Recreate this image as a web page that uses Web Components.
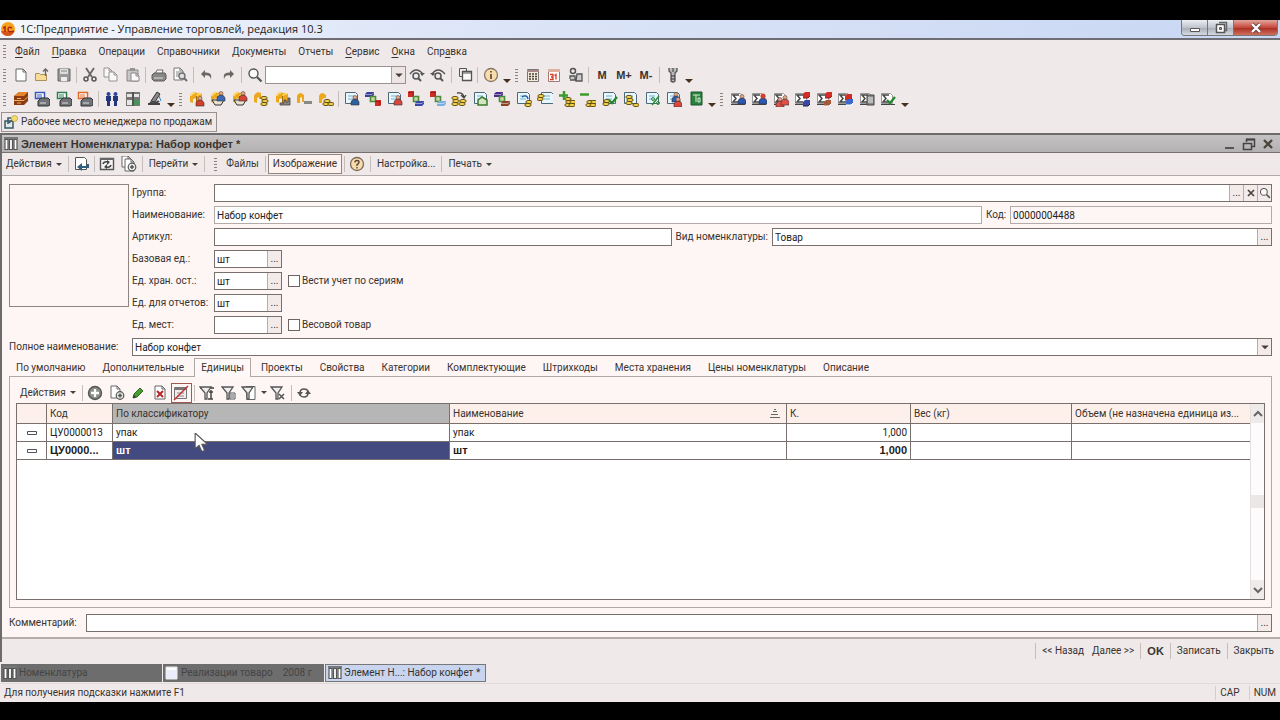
<!DOCTYPE html>
<html lang="ru">
<head>
<meta charset="utf-8">
<title>1С:Предприятие</title>
<style>
html,body{margin:0;height:100%}
body{background:#000;font:10px/14px Roboto,"Liberation Sans",Arial,sans-serif;color:#38332f;overflow:hidden}
</style>
</head>
<body>
<app-shell></app-shell>
<script>
/* ---------- icon parts ---------- */
const doc=(x=1,y=1,w=10,h=12)=>`<path d="M${x} ${y}h${w-3}l3 3v${h-3}h-${w}z" fill="#fff" stroke="#666"/><path d="M${x+w-3} ${y}v3h3" fill="none" stroke="#666"/>`;
const bdoc=`<path d="M1.500 1.500h10l2 2v9h-12z" fill="#eaf6fb" stroke="#4a6a7a"/><path d="M4 5h6M4 8h6" stroke="#68b4d4"/>`;
const man=(x,y,c)=>`<circle cx="${x+3}" cy="${y+1.500}" r="2" fill="#e3a78a" stroke="#643" stroke-width=".6"/><path d="M${x-1} ${y+9}v-3q1-3 4-3t4 3v3z" fill="${c}" stroke="#333" stroke-width=".6"/>`;
const box=`<path d="M1 11V5q1-3 4-4l3 1q2-1 5 1v9l-5 2V7L4 8v4z" fill="#eda81c"/><path d="M2 5q1-3 4-3M8 5q1-3 4-2" fill="none" stroke="#ffdc6c" stroke-width="1.500"/><path d="M7.500 5v8" stroke="#a36a10"/>`;
const coin=(x,y,n=3)=>Array.from({length:n},(_,i)=>`<ellipse cx="${x+3+i%2}" cy="${y+8-i*3}" rx="3.200" ry="1.600" fill="#f3cf4a" stroke="#55450c" stroke-width=".9"/>`).join('');
const cube=(x,y,c)=>`<path d="M${x} ${y+1}l1-1h5v5l-1 1h-5z" fill="${c}"/><path d="M${x} ${y+1.500}h5v4.500" fill="none" stroke="#0004"/>`;
const slab=(x,y,c)=>`<path d="M${x} ${y+2}l2-2h7v3l-2 2h-7z" fill="${c}"/><path d="M${x} ${y+2.500}h7l2-2" fill="none" stroke="#fff7"/>`;
const link=`<path d="M5.500 5.500h5v5h-5z" fill="#c8d8a8" stroke="#4a8a3a" stroke-width="1.600"/>`;
const brick=(x,y,c,d)=>`<path d="M${x} ${y+2}l2-2h5v4l-2 2h-5z" fill="${c}"/><path d="M${x} ${y+6}h5l2-2" fill="none" stroke="${d}"/>`;
const basket=c=>`<path d="M2 9h12l-3 5H5z" fill="#e8e2d0" stroke="#333"/>`+man(8,1,c);
const sum=`<path d="M1.500 2.500h9l2 2v8h-11z" fill="#fff" stroke="#999"/><path d="M9 4H3l3 3.500L3 11h6" fill="none" stroke="#444" stroke-width="1.500"/><path d="M1 13.500h14" stroke="#444"/>`;
const check=`<path d="M7 9l3 3 5-6" fill="none" stroke="#23852c" stroke-width="2.200"/>`;
const lens=(c='#555')=>`<circle cx="6.500" cy="6.500" r="4.500" fill="#fafafa" stroke="${c}" stroke-width="1.400"/><path d="M10 10l4.500 4.500" stroke="${c}" stroke-width="2.200"/>`;
const printer=`<path d="M4 7l2-4h6l-1 4" fill="#fff" stroke="#555"/><path d="M1 8l2-2h11l1 2v4l-2 2H3l-2-2z" fill="#777" stroke="#444"/><path d="M3 11h9" stroke="#ddd"/>`;
const report=c=>`<path d="M1.500 1.500h9v6h-9z" fill="#fff" stroke="${c}" stroke-width="1.500"/><path d="M3 4h5M3 6h5" stroke="${c}"/><path d="M4 10l3-3h7l2 2v5l-2 1H4z" fill="#707378" stroke="#333"/><path d="M6 12h6" stroke="#ddd"/>`;
const funnel=`<path d="M1 2h11L8 8v6H6V8z" fill="#eee" stroke="#555" stroke-width="1.300"/>`;
const undo=`<path d="M6 3L2 7l4 4V8.500q5-1 6 4Q14 5 6 5.500z" fill="#6b6763"/>`;
const ICONS={
 logo:`<circle cx="8" cy="8" r="7" fill="#f4a21e"/><path d="M1 10a7 7 0 0 0 13 1z" fill="#d8541b"/><path d="M3 7l2-1v5M12 7q-4-2-4 1.500T14 10" fill="none" stroke="#b02418" stroke-width="1.500"/>`,
 new:doc(3,2,10,12),
 open:`<path d="M1.500 6.500h4l1 1h6v6h-11z" fill="#f8dc95" stroke="#a8925c"/><path d="M11.500 9V2M9 4.500L11.500 2 14 4.500" fill="none" stroke="#666" stroke-width="1.300"/>`,
 save:`<path d="M2 2h12v12H2z" fill="#999" stroke="#666"/><path d="M4 2h8v5H4z" fill="#ddd"/><path d="M5 10h6v4H5z" fill="#eee"/><path d="M5 4h6" stroke="#888"/>`,
 cut:`<path d="M4 1l6 9M12 1L6 10" stroke="#666" stroke-width="1.800"/><circle cx="4" cy="12" r="2" fill="none" stroke="#555" stroke-width="1.500"/><circle cx="12" cy="12" r="2" fill="none" stroke="#555" stroke-width="1.500"/>`,
 copy:`<g opacity=".65">${doc(1,1,8,9)}${doc(6,5,8,9)}</g>`,
 paste:`<g opacity=".75"><path d="M2 3h11v11H2z" fill="#bbb" stroke="#666"/><path d="M5 1h5v3H5z" fill="#777"/>${doc(6,6,8,8)}</g>`,
 print:`<g opacity=".85">${printer}</g>`,
 preview:`<g opacity=".85">${doc(2,1,9,12)}<path d="M4 5h4M4 7h4M4 9h3" stroke="#777"/><circle cx="10" cy="9" r="3" fill="#ddd" stroke="#555" stroke-width="1.300"/><path d="M12 11l3 3" stroke="#555" stroke-width="2"/></g>`,
 undo, redo:`<g transform="translate(16 0) scale(-1 1)">${undo}</g>`,
 find:lens(),
 next:`<path d="M1 7q6-8 13 0" fill="none" stroke="#555" stroke-width="1.500"/><path d="M11 6h5l-3 3z" fill="#555"/><circle cx="7" cy="9" r="3" fill="none" stroke="#555" stroke-width="1.500"/><path d="M9 11l3 3" stroke="#555" stroke-width="2"/>`,
 prev:`<path d="M2 7q6-8 13 0" fill="none" stroke="#555" stroke-width="1.500"/><path d="M0 6h5L3 9z" fill="#555"/><circle cx="8" cy="9" r="3" fill="none" stroke="#555" stroke-width="1.500"/><path d="M10 11l3 3" stroke="#555" stroke-width="2"/>`,
 windows:`<path d="M2.500 1.500h7v8h-7z" fill="#eee" stroke="#555"/><path d="M5.500 4.500h9v9h-9z" fill="#fafafa" stroke="#555" stroke-width="1.300"/><path d="M5 6h9" stroke="#555"/>`,
 info:`<circle cx="8" cy="8" r="6.500" fill="#f7dcae" stroke="#8a7660" stroke-width="1.300"/><path d="M8 7v5M8 4v1.500" stroke="#6a523a" stroke-width="1.800"/>`,
 help:`<circle cx="8" cy="8" r="6.500" fill="#f9dcae" stroke="#7b6a58" stroke-width="1.300"/><path d="M6 6.500q0-2 2-2t2 1.700T8 8.500V10M8 11v1.500" fill="none" stroke="#5a4636" stroke-width="1.400"/>`,
 calc:`<path d="M2.500 2.500h11v12h-11z" fill="#f6e9d6" stroke="#777"/><path d="M2 4h12" stroke="#a88" stroke-width="2"/><path d="M4 7h8M4 9.500h8M4 12h8" stroke="#444" stroke-width="1.500" stroke-dasharray="2 1"/>`,
 cal:`<path d="M2.500 2.500h11v12h-11z" fill="#fff" stroke="#a77"/><path d="M2 3.500h12" stroke="#ddb0a0" stroke-width="3"/><path d="M4 7.500h3v2.500H5h2v2.500H4M10 12.500v-5l-1.500 1" fill="none" stroke="#d43a20" stroke-width="1.300"/>`,
 tools:`<circle cx="5" cy="4" r="2.500" fill="none" stroke="#555" stroke-width="1.500"/><path d="M2 12V9h5v4H2M9 7h5v7H8z" fill="#ccc" stroke="#555" stroke-width="1.300"/>`,
 wrench:`<path d="M4 1v3l2 2v8q2 2 4 0V6l2-2V1M8 1v4" fill="#bbb" stroke="#555" stroke-width="1.300"/><path d="M6 9h4M6 12h4" stroke="#333"/>`,
 box3:`<path d="M1 5l5-4h9v9l-4 4H1z" fill="#8d3a12"/><path d="M1 5l5-4h9l-4 4z" fill="#e4862c"/><path d="M1 9.500h10l4-4M4 7.500h4M4 12h4" fill="none" stroke="#f0b060"/>`,
 repb:report('#3858b8'),repg:report('#2e8054'),repo:report('#e2682c'),
 people:`<circle cx="4.500" cy="3" r="2" fill="#2b4698"/><circle cx="11.500" cy="3" r="2" fill="#2b4698"/><path d="M2 5h5v5H6v5H3v-5H2zM9 5h5v5h-1v5h-3v-5H9z" fill="#22367e"/>`,
 table:`<path d="M1 1h14v14H1z" fill="#777"/><path d="M2 3h5v3H2zM9 3h5v3H9zM2 9h5v5H2z" fill="#e6e6e6"/><path d="M9 9h5v5H9z" fill="#46945c"/><path d="M8 1v14" stroke="#333"/>`,
 scope:`<path d="M4 10L10 1l3 2-5 8z" fill="#888" stroke="#333"/><path d="M1 13h12M3 11q4 3 9-1" fill="none" stroke="#444" stroke-width="2"/><path d="M12 5l2 5" stroke="#28c"/>`,
 b1:box+man(8,6,'#d63e28'),b2:box+basket('#3a68b4'),b3:box+basket('#d64438'),
 b4:`<path d="M1 11V5q1-3 4-4l3 1v6H6V6L4 7v5z" fill="#eda81c"/>`+coin(8,5),
 b5:box+`<path d="M5 14h10V7h-2v4h-2V9H9v3H5z" fill="#8a857c" stroke="#444" stroke-width=".8"/>`,
 b6:`<path d="M1 12V5q1-3 4-3l3 2v7H6V6L4 7v5z" fill="#eda81c"/><path d="M8 10h8v3H8z" fill="#8a8a84"/>`,
 b7:`<path d="M1 12V5q1-3 4-3l3 2v3H6L4 9v3z" fill="#eda81c"/>`+coin(5,5,2)+coin(10,5,1),
 d1:bdoc+man(8,5,'#2f5f9c'),d2:slab(0,1,'#3a3f9a')+link+cube(10,9,'#d22c24'),d3:bdoc+man(8,5,'#d8463c'),
 d4:cube(0,0,'#d22c24')+link+slab(7,10,'#3b48a8'),d5:cube(0,0,'#d22c24')+link+slab(7,10,'#78aee0'),
 d6:coin(1,5,3)+coin(8,5,2)+`<path d="M6 2q6-1 7 4M10 4l3 3 2-3" fill="none" stroke="#444" stroke-width="1.300"/>`,
 d7:bdoc+`<path d="M5 14V9l4-3 5 3v5z" fill="#d4e4c0" stroke="#3d7a2c" stroke-width="1.500"/>`,
 d8:slab(0,1,'#4a2c8c')+link+slab(7,10,'#8c4428'),
 d9:bdoc+coin(9,6,2)+`<path d="M6 6q5-3 6 2" fill="none" stroke="#235fa0" stroke-width="1.500"/>`,
 d10:`<g transform="translate(3 0)">${bdoc}</g>`+coin(0,0,2),
 d11:coin(6,6,3)+coin(10,6,2)+`<path d="M5 0v9M0 4.500h9" stroke="#3f9a2e" stroke-width="2.500"/>`,
 d12:coin(6,6,2)+coin(10,6,2)+`<path d="M0 3.500h9" stroke="#3f9a2e" stroke-width="2.500"/>`,
 d13:bdoc+coin(1,5,2)+check,d14:bdoc+coin(3,4,3)+coin(10,6,1),
 d15:bdoc+`<path d="M14 5l-7 9" stroke="#2c8a34" stroke-width="1.500"/><circle cx="8" cy="8" r="1.500" fill="none" stroke="#2c8a34"/><circle cx="13" cy="12" r="1.500" fill="none" stroke="#2c8a34"/>`,
 d16:bdoc+man(7,2,'#2c5cb0')+man(9,7,'#d8463c'),
 d17:`<path d="M3 1h11v13H3z" fill="#2b8040" stroke="#1c5428"/><path d="M5 4h7M8 4v7M10 7h2v4h-2z" fill="none" stroke="#d8f0d0"/>`,
 s1:sum+man(9,4,'#2c56b0'),s2:sum+man(9,4,'#2c56b0')+`<circle cx="12" cy="5" r="2.500" fill="#d04030"/>`,s3:sum+man(4,7,'#e05048')+man(9,5,'#e05048'),
 s4:sum+brick(9,1,'#d22c24','#822')+brick(9,9,'#3b48a8','#223'),s5:sum+brick(9,1,'#d22c24','#822')+brick(8,9,'#a45a3a','#fff'),
 s6:sum+brick(8,3,'#d22c24','#822')+brick(9,8,'#3a68d0','#fff'),
 s7:sum+`<path d="M8 4h7v10H8z" fill="#888" stroke="#444"/><path d="M9 7h5M9 9h5M9 11h5" stroke="#eee"/>`,s8:sum+check,
 place:`<path d="M2 7h8v7H2z" fill="#dfe9e6" stroke="#3a5a68" stroke-width="1.500"/><path d="M5 10V4h3M6 9l5-5" fill="none" stroke="#3a5a68" stroke-width="1.500"/><circle cx="11.500" cy="4.500" r="3" fill="#f5dc70" stroke="#b59b3c" stroke-width=".7"/>`,
 cols:`<path d="M2 3.500h3v10H2zM6.500 3.500h3v10h-3zM11 3.500h3v10h-3z" fill="#fff" stroke="#555" stroke-width="1.200"/><path d="M1 2h14" stroke="#777" stroke-width="2"/>`,
 page:`<path d="M2 2h11v12H2z" fill="#e9eefa" stroke="#eee"/><path d="M3 4h9" stroke="#fff" stroke-width="2"/>`,
 enter:`<path d="M2.500 1.500h9l2 2v10h-11z" fill="#fff" stroke="#555"/><path d="M15 8v3H8" fill="none" stroke="#2f5f80" stroke-width="2"/><path d="M9 7v8l-5-4z" fill="#2f5f80"/>`,
 reload:`<path d="M1.500 2.500h13v11h-13z" fill="#f3f3f3" stroke="#555" stroke-width="1.400"/><path d="M1 3h14" stroke="#666" stroke-width="2"/><path d="M4 8q1-3 5-2M12 9q-1 3-5 2" fill="none" stroke="#444" stroke-width="1.500"/><path d="M8 4l3 2-3 3zM8 8l-3 3 3 2z" fill="#444"/>`,
 addcopy:`${doc(1,0,9,11)}${doc(4,3,9,12)}<circle cx="11" cy="11" r="3.800" fill="#e8efe8" stroke="#555" stroke-width="1.200"/><path d="M11 9v4M9 11h4" stroke="#555" stroke-width="1.500"/>`,
 add:`<circle cx="8" cy="8" r="6.500" fill="#8a8f86" stroke="#555" stroke-width="1.400"/><path d="M8 4v8M4 8h8" stroke="#fff" stroke-width="2.300"/>`,
 adddoc:`${doc(2,1,9,12)}<circle cx="11" cy="10.500" r="3.800" fill="#dfe8dc" stroke="#555" stroke-width="1.200"/><path d="M11 8.500v4M9 10.500h4" stroke="#555" stroke-width="1.500"/>`,
 edit:`<path d="M3 13l1-4 6-6 3 3-6 6z" fill="#4c9c34" stroke="#2c6a1e"/><path d="M3 13l1-3 2 2z" fill="#333"/>`,
 del:`${doc(3,1,10,13)}<path d="M5 6l6 6M11 6l-6 6" stroke="#b8262c" stroke-width="2"/>`,
 nogroup:`<path d="M1.500 2.500h12v11h-12z" fill="#f3eeee" stroke="#777"/><path d="M2 4h11" stroke="#777" stroke-width="2"/><path d="M4 8h7M4 11h7" stroke="#888"/><path d="M15 1L1 15" stroke="#c03030" stroke-width="1.500"/>`,
 f1:`<path d="M1 2h14v2H1z" fill="#666"/>${funnel}<path d="M10 7h4M12 5v9M9 14h5" stroke="#444" stroke-width="1.500"/>`,
 f2:`${funnel}<path d="M9 8h5v6H9z" fill="#fff" stroke="#555"/><path d="M10 10h3M10 12h3" stroke="#555"/>`,
 f3:`<path d="M5 1.500h9v13H6z" fill="#fff" stroke="#666"/>${funnel}`,
 f4:`${funnel}<path d="M9 9l5 5M14 9l-5 5" stroke="#555" stroke-width="1.500"/>`,
 refresh:`<path d="M4 8q0-4 4-4 3 0 4 2M12 8q0 4-4 4-3 0-4-2" fill="none" stroke="#555" stroke-width="1.600"/><path d="M1 7h6l-3 4zM15 9H9l3-4z" fill="#555"/>`,
 min:`<path d="M3 12h9" stroke="#555" stroke-width="2"/>`,
 rest:`<path d="M5.500 6V3.500h8v7h-3" fill="none" stroke="#444" stroke-width="1.500"/><path d="M5 3.500h9" stroke="#444" stroke-width="2"/><path d="M2.500 7.500h8v6h-8z" fill="none" stroke="#444" stroke-width="1.500"/>`,
 cross:`<path d="M4 4l8 8M12 4l-8 8" stroke="#4a443c" stroke-width="2.300"/>`,
 wmin:`<path d="M3.500 8.500h9v3h-9z" fill="#fff" stroke="#555"/>`,
 wrest:`<path d="M6 2.500h7.500v8H12" fill="none" stroke="#666" stroke-width="1.500"/><path d="M3.500 4.500h8v8h-8z" fill="#fff" stroke="#555" stroke-width="1.500"/><path d="M6.500 7.500h2v2h-2z" fill="#aaa" stroke="#555"/>`,
 wclose:`<path d="M4 4l8 8M12 4l-8 8" stroke="#644" stroke-width="4"/><path d="M4 4l8 8M12 4l-8 8" stroke="#fff" stroke-width="2.300"/>`,
 down:`<path d="M3 6h10l-5 5z" fill="#45403d"/>`,
 up:`<path d="M4 10l4-4 4 4" fill="none" stroke="#666" stroke-width="2"/>`,
 dn:`<path d="M4 6l4 4 4-4" fill="none" stroke="#666" stroke-width="2"/>`,
 sort:`<path d="M3 12.500h10M4 9.500h7M6 6.500h4M7 4.500h2" stroke="#666"/>`,
 dash:`<path d="M3.500 6.500h9v3h-9z" fill="#fff" stroke="#555"/>`,
 cursor:`<path d="M1 0v14l3.500-3 2.500 5.500 2.500-1L7 10h5z" fill="#fff" stroke="#555"/>`
};
const define=(name,css,html,init)=>customElements.define(name,class extends HTMLElement{
  constructor(){
    super();
    const r=this.attachShadow({mode:'open'});
    const t=document.createElement('template');
    t.innerHTML=`<style>*{box-sizing:border-box}button,input{font:inherit;color:inherit;margin:0;padding:0;border:0;background:none}${css}</style>`+(typeof html==='function'?html(this):html);
    r.append(t.content.cloneNode(true));
    if(init)init(this,r);
  }
});
const A=(e,n,d='')=>e.getAttribute(n)??d;
const BOLD=`font-family:"Liberation Sans",Arial,sans-serif;font-size:11px;font-weight:bold`;

define('ui-icon',`:host{display:block;flex:none;width:16px;height:16px}svg{display:block;width:100%;height:100%}`,
  e=>`<svg viewBox="0 0 16 16" aria-hidden="true">${ICONS[A(e,'name')]||''}</svg>`);

define('tool-button',`:host{display:block;flex:none}
button{display:flex;align-items:center;justify-content:center;width:100%;height:20px;white-space:nowrap;border:1px solid transparent}
:host([text]) button{padding:0 3px}
:host([bold]) button{${BOLD}}
:host([boxed]) button{border-color:#8d8681;background:#fef2ef;padding:0 4px}
:host([drop]) button::after{content:"";border:3px solid transparent;border-top-color:#45403d;border-bottom:0;margin-left:4px}`,
  e=>`<button type="button" aria-label="${A(e,'icon')}">${e.hasAttribute('icon')?`<ui-icon name="${A(e,'icon')}"></ui-icon>`:''}<slot></slot></button>`,
  (e,r)=>{if(!e.hasAttribute('icon'))r.querySelector('button').removeAttribute('aria-label')});

define('tool-icons',`:host{display:flex;flex:none}tool-button{width:21px}tool-button:nth-of-type(even){width:22px}`,
  e=>A(e,'names').split(' ').map(n=>`<tool-button icon="${n}"></tool-button>`).join(''));
define('tool-sep',`:host{display:block;flex:none;width:5px;height:16px}i{display:block;width:1px;height:100%;margin:0 2px;background:#c4bdba}`,`<i></i>`);
define('tool-grip',`:host{display:block;flex:none;width:3px;height:13px;margin:0 4px 0 3px;background:repeating-linear-gradient(#8a8380 0 1px,transparent 1px 3px)}`,``);
define('tool-more',`:host{display:flex;flex:none;align-items:flex-end;justify-content:center;width:11px;height:16px}i{border:4px solid transparent;border-top-color:#45301f;border-bottom:0}`,`<i></i>`);

define('title-bar',`:host{display:flex;flex:none;height:20px;background:linear-gradient(90deg,#f4f6fb,#dfe7f8 30%,#c9d7f3);border-bottom:2px solid #6d6d73;color:#222;font:11px/18px "Open Sans","Noto Sans",sans-serif}
ui-icon.logo{margin:1px 4px 0 0}
h1{flex:1;font:inherit;margin:0}
div{display:flex;height:16px;margin-right:2px;border:1px solid #777;border-top:0;border-radius:0 0 4px 4px;overflow:hidden}
button{display:flex;justify-content:center;align-items:center;width:26px;height:15px;background:linear-gradient(#eceef2,#bfc4ce 50%,#a5aab5 51%,#d5d9e2);border-right:1px solid #777}
button:last-child{width:43px;border:0;background:linear-gradient(#e3a79d,#c4493a 50%,#a82a20 51%,#d0705c)}`,
`<ui-icon class="logo" name="logo"></ui-icon><h1>1С:Предприятие - Управление торговлей, редакция 10.3</h1>
<div><button aria-label="Свернуть"><ui-icon name="wmin"></ui-icon></button><button aria-label="Развернуть"><ui-icon name="wrest"></ui-icon></button><button aria-label="Закрыть"><ui-icon name="wclose"></ui-icon></button></div>`);

define('menu-bar',`:host{display:flex;flex:none;align-items:center;height:23px}
nav{display:flex;gap:12px;margin-left:5px}a{color:inherit;text-decoration:none}u{text-underline-offset:2px}`,
`<tool-grip></tool-grip><nav><a href="#"><u>Ф</u>айл</a><a href="#"><u>П</u>равка</a><a href="#">Операции</a><a href="#">Справочники</a><a href="#">Документы</a><a href="#">Отчеты</a><a href="#"><u>С</u>ервис</a><a href="#"><u>О</u>кна</a><a href="#">Спр<u>а</u>вка</a></nav>`);

define('search-combo',`:host{display:flex;flex:none;width:141px;height:18px;border:1px solid #99928f;background:#fff}
input{flex:1;min-width:0;outline:0}button{width:14px;border-left:1px solid #aaa29f;background:#ece5e4;display:flex;align-items:center;justify-content:center}ui-icon{width:12px;height:12px}`,
`<input type="text" aria-label="Поиск"><button aria-label="Список"><ui-icon name="down"></ui-icon></button>`);

define('main-tools',`:host{display:block;flex:none}.r{display:flex;align-items:center;height:24px}.r tool-button{width:22px}`,
`<div class="r"><tool-grip></tool-grip><tool-icons names="new open save"></tool-icons><tool-sep></tool-sep><tool-icons names="cut copy paste"></tool-icons><tool-sep></tool-sep><tool-icons names="print preview"></tool-icons><tool-sep></tool-sep><tool-icons names="undo redo"></tool-icons><tool-sep></tool-sep><tool-icons names="find"></tool-icons><search-combo></search-combo><tool-icons names="next prev"></tool-icons><tool-sep></tool-sep><tool-icons names="windows"></tool-icons><tool-sep></tool-sep><tool-icons names="info"></tool-icons><tool-more></tool-more><tool-grip></tool-grip><tool-icons names="calc cal tools"></tool-icons><tool-sep></tool-sep><tool-button bold>M</tool-button><tool-button bold>M+</tool-button><tool-button bold>M-</tool-button><tool-sep></tool-sep><tool-icons names="wrench"></tool-icons><tool-more></tool-more></div>
<div class="r"><tool-grip></tool-grip><tool-icons names="box3 repb repg repo"></tool-icons><tool-sep></tool-sep><tool-icons names="people table scope"></tool-icons><tool-more></tool-more><tool-grip></tool-grip><tool-icons names="b1 b2 b3 b4 b5 b6 b7"></tool-icons><tool-sep></tool-sep><tool-icons names="d1 d2 d3 d4 d5 d6 d7 d8 d9 d10 d11 d12 d13 d14 d15 d16 d17"></tool-icons><tool-more></tool-more><tool-grip></tool-grip><tool-icons names="s1 s2 s3 s4 s5 s6 s7 s8"></tool-icons><tool-more></tool-more></div>`);

define('place-bar',`:host{display:flex;flex:none;height:22px;align-items:center;padding-left:1px}
button{display:flex;align-items:center;gap:2px;height:20px;padding:0 4px 0 1px;border:1px solid #99918e}`,
`<button type="button"><ui-icon name="place"></ui-icon>Рабочее место менеджера по продажам</button>`);

define('field-box',`:host{display:flex;align-items:center;min-width:0;height:18px}
label{flex:none;width:var(--label-width,auto);margin-right:var(--label-gap,4px);white-space:nowrap}
div{display:flex;flex:1;min-width:0;height:18px;border:1px solid #77706d;background:#fff}
:host([soft]) div{border-color:#b3aba9}
:host([locked]) div{background:#fef5f5}
:host([small]) div{flex:none;width:68px}
input{flex:1;min-width:0;width:0;height:16px;padding:0 2px;outline:0;color:#222}
button{flex:none;display:flex;align-items:center;justify-content:center;width:14px;height:16px;border-left:1px solid #b5adaa;background:#f2ebea}
ui-icon{width:12px;height:12px}`,
 e=>`<label for="i">${A(e,'label')}</label><div><input id="i" type="text" value="${A(e,'value')}"${e.hasAttribute('locked')?' readonly':''}>${A(e,'keys').split(' ').filter(Boolean).map(k=>`<button type="button" aria-label="${k}">${k==='dots'?'...':`<ui-icon name="${k}"></ui-icon>`}</button>`).join('')}</div>`);

define('check-box',`:host{display:flex;align-items:center}label{display:flex;align-items:center;gap:2px}
input{appearance:none;width:12px;height:12px;border:1px solid #6c6562;background:#fff}`,`<label><input type="checkbox"><slot></slot></label>`);

define('item-form',`:host{display:block;padding:8px 8px 0 7px}
.top{display:flex;gap:3px}.pic{flex:none;width:120px;height:123px;border:1px solid #8d8582}
.rows{flex:1;display:grid;gap:4px;--label-width:78px}
.row{display:flex;gap:4px;min-width:0}
.row>*{flex:1}.row .own{--label-width:auto}
.row .a{flex:19 1 0}.row .k{flex:21 1 0}
.row .c{flex:none;width:286px}
.row [small]{flex:none;margin-right:2px}
.full{margin-top:4px;--label-width:119px}`,
`<div class="top"><div class="pic"></div><div class="rows">
<div class="row"><field-box label="Группа:" keys="dots cross find"></field-box></div>
<div class="row"><field-box soft label="Наименование:" value="Набор конфет"></field-box><field-box class="own c" soft locked label="Код:" value="00000004488"></field-box></div>
<div class="row"><field-box class="a" label="Артикул:"></field-box><field-box class="own k" label="Вид номенклатуры:" value="Товар" keys="dots"></field-box></div>
<div class="row"><field-box small label="Базовая ед.:" value="шт" keys="dots"></field-box></div>
<div class="row"><field-box small label="Ед. хран. ост.:" value="шт" keys="dots"></field-box><check-box>Вести учет по сериям</check-box></div>
<div class="row"><field-box small label="Ед. для отчетов:" value="шт" keys="dots"></field-box></div>
<div class="row"><field-box small label="Ед. мест:" keys="dots"></field-box><check-box>Весовой товар</check-box></div>
</div></div>
<field-box class="full" label="Полное наименование:" value="Набор конфет" keys="down"></field-box>`);

define('unit-grid',`:host{display:flex;flex:1;min-height:0;position:relative;border:1px solid #77706d;background:#fff}
.t{flex:1;min-width:0}
table{width:100%;border-collapse:separate;border-spacing:0;table-layout:fixed}
th,td{font-weight:normal;text-align:left;padding:0 3px;white-space:nowrap;overflow:hidden;border:solid #77706d;border-width:0 1px 1px 0;line-height:17px}
td{height:18px;color:#222}
tr>:last-child{border-right:0}
th{height:20px;background:#fdf0ea}
.n{text-align:right}
.on{background:#b7b6b6}
.b td{${BOLD};color:#1c1c1c}
.b .sel{color:#fff;background:#424a80}
th.s div{display:flex;justify-content:space-between}
td ui-icon{margin:0 auto}
.bar{flex:none;width:14px;display:flex;flex-direction:column;justify-content:space-between;background:#fdfbfb;border-left:1px solid #e6e0e0}
.bar button{display:flex;align-items:center;justify-content:center;height:19px;background:#f0ebeb}
.bar i{height:13px;background:#ebe7e7}
ui-icon.cur{position:absolute;left:177px;top:29px;width:18px;height:18px}
.k{width:30px}.c{width:66px}.f{width:124px}.w{width:161px}.v{width:178px}`,
`<div class="t"><table><colgroup><col class="k"><col class="c"><col><col><col class="f"><col class="w"><col class="v"></colgroup>
<thead><tr><th></th><th>Код</th><th class="on">По классификатору</th><th class="s"><div>Наименование<ui-icon name="sort"></ui-icon></div></th><th>К.</th><th>Вес (кг)</th><th>Объем (не назначена единица из...</th></tr></thead>
<tbody><tr><td><ui-icon name="dash"></ui-icon></td><td>ЦУ0000013</td><td>упак</td><td>упак</td><td class="n">1,000</td><td></td><td></td></tr>
<tr class="b"><td><ui-icon name="dash"></ui-icon></td><td>ЦУ0000...</td><td class="sel">шт</td><td>шт</td><td class="n">1,000</td><td></td><td></td></tr></tbody></table></div>
<div class="bar"><button aria-label="Вверх"><ui-icon name="up"></ui-icon></button><i></i><button aria-label="Вниз"><ui-icon name="dn"></ui-icon></button></div>
<ui-icon class="cur" name="cursor"></ui-icon>`);

define('tab-panel',`:host{display:flex;flex-direction:column;flex:1;min-height:0;padding:2px 8px 0 7px}
.tabs{display:flex;gap:3px;height:19px;margin-bottom:-1px;position:relative}
.tabs button{padding:0 6px;border:1px solid transparent;border-bottom:0;white-space:nowrap}
.tabs .on{background:#fef8f8;border-color:#b0a8a5}
.pane{flex:1;display:flex;flex-direction:column;min-height:0;border:1px solid #b0a8a5;padding:5px 6px 7px}
.bar{display:flex;align-items:center;height:21px}
.press{outline:1px solid #a05a50;outline-offset:-1px}`,
`<div class="tabs" role="tablist">${['По умолчанию','Дополнительные','Единицы','Проекты','Свойства','Категории','Комплектующие','Штрихкоды','Места хранения','Цены номенклатуры','Описание'].map((t,i)=>`<button role="tab" type="button"${i===2?' class="on"':''}>${t}</button>`).join('')}</div>
<div class="pane"><div class="bar"><tool-button text drop>Действия</tool-button><tool-sep></tool-sep><tool-icons names="add adddoc edit del"></tool-icons><tool-icons class="press" names="nogroup"></tool-icons><tool-sep></tool-sep><tool-icons names="f1 f2"></tool-icons><tool-button drop icon="f3"></tool-button><tool-icons names="f4"></tool-icons><tool-sep></tool-sep><tool-icons names="refresh"></tool-icons></div><unit-grid></unit-grid></div>`);

define('item-window',`:host{display:flex;flex-direction:column;flex:1;min-height:0;border-left:2px solid #6d6b6b;border-top:2px solid #6d6b6b}
header{display:flex;flex:none;align-items:center;height:18px;padding:0 1px;background:linear-gradient(#c4c2c2,#b3b1b1);border-bottom:1px solid #77706d;${BOLD}}
h2{flex:1;font:inherit;margin:0 0 0 2px}
header button{width:19px;height:16px}
.bar{display:flex;flex:none;align-items:center;height:23px;border-bottom:1px solid #b3abab}
.bar tool-grip{margin:0 5px 0 7px}
.body{flex:1;min-height:0;display:flex;flex-direction:column;background:#fef5f5;border-bottom:2px solid #b5adab;padding-bottom:5px}
.note{flex:none;margin:6px 8px 0 7px;--label-width:73px}
footer{display:flex;flex:none;align-items:center;justify-content:flex-end;height:23px;padding-right:2px}`,
`<header><ui-icon name="cols"></ui-icon><h2>Элемент Номенклатура: Набор конфет *</h2><button aria-label="Свернуть"><ui-icon name="min"></ui-icon></button><button aria-label="Восстановить"><ui-icon name="rest"></ui-icon></button><button aria-label="Закрыть"><ui-icon name="cross"></ui-icon></button></header>
<div class="bar"><tool-button text drop>Действия</tool-button><tool-sep></tool-sep><tool-icons names="enter"></tool-icons><tool-sep></tool-sep><tool-icons names="reload addcopy"></tool-icons><tool-sep></tool-sep><tool-button text drop>Перейти</tool-button><tool-sep></tool-sep><tool-grip></tool-grip><tool-button text>Файлы</tool-button><tool-sep></tool-sep><tool-button text boxed>Изображение</tool-button><tool-sep></tool-sep><tool-icons names="help"></tool-icons><tool-sep></tool-sep><tool-button text>Настройка...</tool-button><tool-sep></tool-sep><tool-button text drop>Печать</tool-button></div>
<div class="body"><item-form></item-form><tab-panel></tab-panel><field-box class="note" label="Комментарий:" keys="dots"></field-box></div>
<footer><tool-sep></tool-sep><tool-button text>&lt;&lt; Назад</tool-button><tool-button text>Далее &gt;&gt;</tool-button><tool-sep></tool-sep><tool-button text bold>OK</tool-button><tool-sep></tool-sep><tool-button text>Записать</tool-button><tool-sep></tool-sep><tool-button text>Закрыть</tool-button></footer>`);

define('task-bar',`:host{display:flex;flex:none;gap:1px;height:21px;padding:2px 1px 1px}
button{display:flex;align-items:center;gap:1px;flex:0 1 161px;min-width:0;height:18px;padding:0 1px;background:#6d6d6d;color:#444;white-space:pre}
.on{background:#c9d5ee;border:1px solid #777;color:#333}`,
`<button type="button"><ui-icon name="cols"></ui-icon>Номенклатура</button><button type="button"><ui-icon name="page"></ui-icon>Реализации товаро    2008 г</button><button type="button" class="on"><ui-icon name="cols"></ui-icon>Элемент Н...: Набор конфет *</button>`);

define('status-bar',`:host{display:flex;flex:none;align-items:center;height:19px;border-top:1px solid #e0dada;padding:0 0 0 4px;gap:5px}
span{flex:1}b{font-weight:normal;border-left:1px solid #d5cecd;padding:0 4px}`,
`<span>Для получения подсказки нажмите F1</span><b>CAP</b><b>NUM</b>`);

define('app-shell',`:host{display:flex;flex-direction:column;height:100vh;padding:20px 0 18px;box-sizing:border-box}
main{display:flex;flex-direction:column;flex:1;min-height:0;background:#efe9e9}`,
`<main><title-bar></title-bar><menu-bar></menu-bar><main-tools></main-tools><place-bar></place-bar><item-window></item-window><task-bar></task-bar><status-bar></status-bar></main>`);
</script>
</body>
</html>
